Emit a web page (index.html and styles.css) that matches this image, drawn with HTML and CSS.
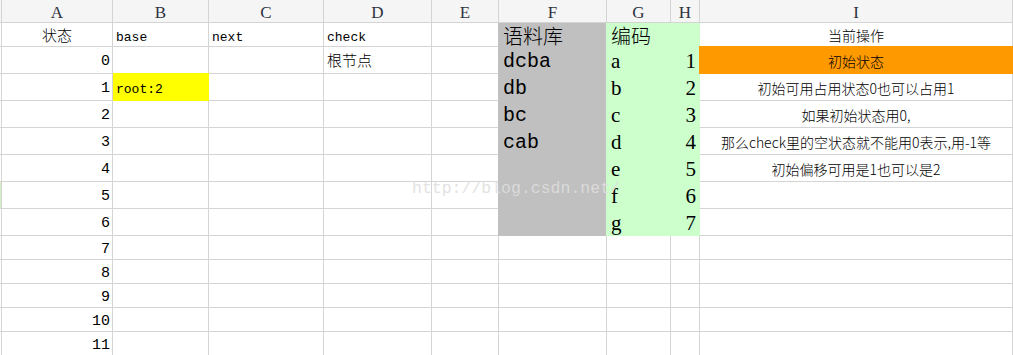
FILE: index.html
```html
<!DOCTYPE html>
<html lang="zh-CN">
<head>
<meta charset="utf-8">
<title>Sheet</title>
<link rel="stylesheet" href="styles.css">
</head>
<body>
<div class="sheet">
  <div class="row hdr">
    <div class="c stub"></div>
    <div class="c hd">A</div><div class="c hd">B</div><div class="c hd">C</div><div class="c hd">D</div><div class="c hd">E</div><div class="c hd">F</div><div class="c hd">G</div><div class="c hd">H</div><div class="c hd">I</div>
  </div>
  <div class="row r24">
    <div class="c stub"></div>
    <div class="c ctr cjk15">状态</div>
    <div class="c mono">base</div>
    <div class="c mono">next</div>
    <div class="c mono">check</div>
    <div class="c"></div>
    <div class="c gy big">语料库</div>
    <div class="c gn big">编码</div>
    <div class="c gn"></div>
    <div class="c ctr note">当前操作</div>
  </div>
  <div class="row r27">
    <div class="c stub"></div>
    <div class="c num">0</div>
    <div class="c"></div>
    <div class="c"></div>
    <div class="c cjk15">根节点</div>
    <div class="c"></div>
    <div class="c gy word">dcba</div>
    <div class="c gn ltr">a</div>
    <div class="c gn code">1</div>
    <div class="c ctr note or">初始状态</div>
  </div>
  <div class="row r27">
    <div class="c stub"></div>
    <div class="c num">1</div>
    <div class="c mono yl">root:2</div>
    <div class="c"></div>
    <div class="c"></div>
    <div class="c"></div>
    <div class="c gy word">db</div>
    <div class="c gn ltr">b</div>
    <div class="c gn code">2</div>
    <div class="c ctr note">初始可用占用状态0也可以占用1</div>
  </div>
  <div class="row r27">
    <div class="c stub"></div>
    <div class="c num">2</div>
    <div class="c"></div><div class="c"></div><div class="c"></div><div class="c"></div>
    <div class="c gy word">bc</div>
    <div class="c gn ltr">c</div>
    <div class="c gn code">3</div>
    <div class="c ctr note">如果初始状态用0,</div>
  </div>
  <div class="row r27">
    <div class="c stub"></div>
    <div class="c num">3</div>
    <div class="c"></div><div class="c"></div><div class="c"></div><div class="c"></div>
    <div class="c gy word">cab</div>
    <div class="c gn ltr">d</div>
    <div class="c gn code">4</div>
    <div class="c ctr note">那么check里的空状态就不能用0表示,用-1等</div>
  </div>
  <div class="row r27">
    <div class="c stub"></div>
    <div class="c num">4</div>
    <div class="c"></div><div class="c"></div><div class="c"></div><div class="c"></div>
    <div class="c gy"></div>
    <div class="c gn ltr">e</div>
    <div class="c gn code">5</div>
    <div class="c ctr note">初始偏移可用是1也可以是2</div>
  </div>
  <div class="row r27">
    <div class="c stub sel"></div>
    <div class="c num">5</div>
    <div class="c"></div><div class="c"></div><div class="c"></div><div class="c"></div>
    <div class="c gy"></div>
    <div class="c gn ltr">f</div>
    <div class="c gn code">6</div>
    <div class="c"></div>
  </div>
  <div class="row r27">
    <div class="c stub"></div>
    <div class="c num">6</div>
    <div class="c"></div><div class="c"></div><div class="c"></div><div class="c"></div>
    <div class="c gy"></div>
    <div class="c gn ltr">g</div>
    <div class="c gn code">7</div>
    <div class="c"></div>
  </div>
  <div class="row r24">
    <div class="c stub"></div>
    <div class="c num">7</div>
    <div class="c"></div><div class="c"></div><div class="c"></div><div class="c"></div><div class="c"></div><div class="c"></div><div class="c"></div><div class="c"></div>
  </div>
  <div class="row r24">
    <div class="c stub"></div>
    <div class="c num">8</div>
    <div class="c"></div><div class="c"></div><div class="c"></div><div class="c"></div><div class="c"></div><div class="c"></div><div class="c"></div><div class="c"></div>
  </div>
  <div class="row r24">
    <div class="c stub"></div>
    <div class="c num">9</div>
    <div class="c"></div><div class="c"></div><div class="c"></div><div class="c"></div><div class="c"></div><div class="c"></div><div class="c"></div><div class="c"></div>
  </div>
  <div class="row r24">
    <div class="c stub"></div>
    <div class="c num">10</div>
    <div class="c"></div><div class="c"></div><div class="c"></div><div class="c"></div><div class="c"></div><div class="c"></div><div class="c"></div><div class="c"></div>
  </div>
  <div class="row r24">
    <div class="c stub"></div>
    <div class="c num">11</div>
    <div class="c"></div><div class="c"></div><div class="c"></div><div class="c"></div><div class="c"></div><div class="c"></div><div class="c"></div><div class="c"></div>
  </div>
  <div class="watermark">http://blog.csdn.net/</div>
</div>
</body>
</html>
```
FILE: styles.css
```css
html, body {
  margin: 0;
  padding: 0;
  background: #ffffff;
  overflow: hidden;
}

.sheet {
  position: relative;
  width: 1013px;
  font-family: "Noto Sans CJK SC", sans-serif;
  font-weight: 300;
  color: #000;
}

.row {
  display: grid;
  grid-template-columns: 2px 111px 96px 115px 108px 67px 108px 64px 29px 313px;
}

.hdr { height: 23px; }
.r24 { height: 24px; }
.r27 { height: 27px; }

.c {
  box-sizing: border-box;
  background: #ffffff;
  border-right: 1px solid #d4d4d4;
  border-bottom: 1px solid #d4d4d4;
  overflow: hidden;
  white-space: nowrap;
  font-size: 14px;
}

.hdr .c { line-height: 22px; }
.r24 .c { line-height: 23px; }
.r27 .c { line-height: 26px; }

.stub { background: #ffffff; }
.stub.sel { background: #d6efc6; }

.hd {
  background: #f5f5f5;
  text-align: center;
  font-family: "Liberation Serif", serif;
  font-weight: 400;
  font-size: 17px;
  color: #2e3240;
  padding-top: 2px;
}
.hdr .stub { background: #f5f5f5; }

.ctr { text-align: center; }

.cjk15 {
  font-size: 15px;
  padding-left: 3px;
}
.cjk15.ctr { padding-left: 0; }

.mono {
  font-family: "Liberation Mono", monospace;
  font-weight: 400;
  font-size: 13px;
  padding-left: 3px;
  padding-top: 3px;
}

.num {
  font-family: "Liberation Mono", monospace;
  font-weight: 400;
  font-size: 15px;
  text-align: right;
  padding-right: 2px;
  padding-top: 2px;
}

.r24 .big {
  font-size: 20px;
  line-height: 20px;
  padding-left: 4px;
  padding-top: 3px;
  overflow: visible;
}

.word {
  font-family: "Liberation Mono", monospace;
  font-weight: 400;
  font-size: 20px;
  padding-left: 4px;
  padding-top: 2px;
}

.ltr {
  font-family: "Liberation Serif", serif;
  font-weight: 400;
  font-size: 21px;
  padding-left: 4px;
  padding-top: 1px;
}

.code {
  font-family: "Liberation Serif", serif;
  font-weight: 400;
  font-size: 21px;
  text-align: right;
  padding-right: 3px;
  padding-top: 1px;
}

.note {
  font-size: 14px;
  padding-top: 1px;
}

.gy {
  background: #c0c0c0;
  border-right-color: #c0c0c0;
  border-bottom-color: #c0c0c0;
  box-shadow: -1px 0 0 #c0c0c0;
}

.gn {
  background: #ccffcc;
  border-right-color: #ccffcc;
  border-bottom-color: #ccffcc;
  box-shadow: -1px 0 0 #ccffcc;
}

.yl {
  background: #ffff00;
  border-right-color: #ffff00;
  border-bottom-color: #ffff00;
  box-shadow: 0 -1px 0 #ffff00;
}

.or {
  background: #ff9900;
  border-right-color: #ff9900;
  border-bottom-color: #ff9900;
  box-shadow: 0 0 0 1px #ff9900;
}

.watermark {
  position: absolute;
  left: 412px;
  top: 179px;
  font-family: "Liberation Mono", monospace;
  font-weight: 400;
  font-size: 16.5px;
  line-height: 20px;
  color: rgba(222, 222, 222, 0.9);
  pointer-events: none;
  white-space: nowrap;
}
```
